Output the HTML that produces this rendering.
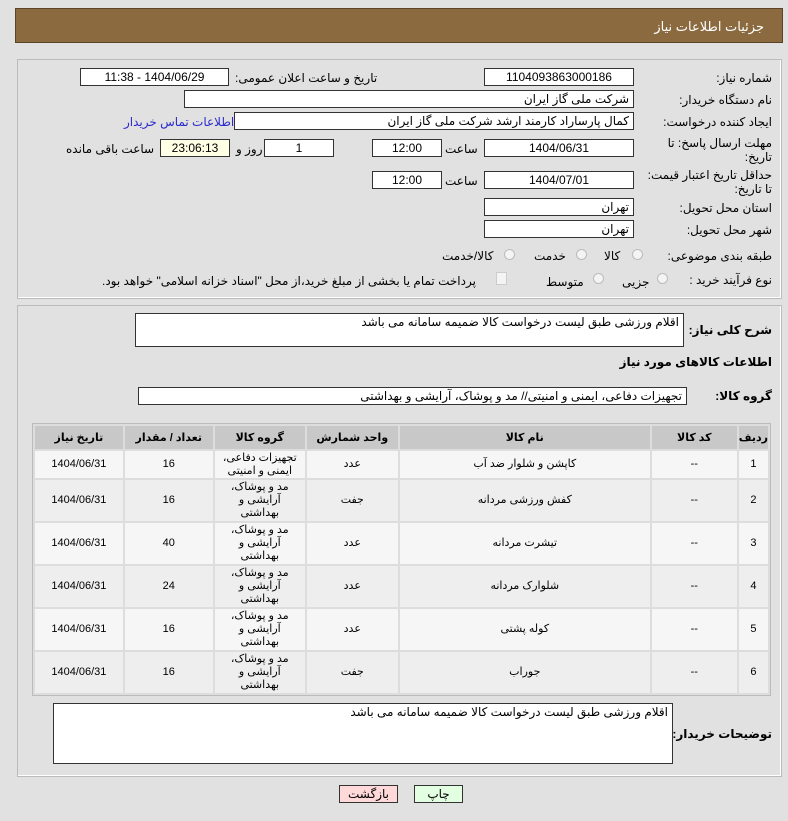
<!DOCTYPE html>
<html><head><meta charset="utf-8"><style>
body{margin:0;width:788px;height:821px;background:#e1e1e1;font-family:"Liberation Sans","DejaVu Sans",sans-serif;font-size:12px;color:#000;position:relative;overflow:hidden}
.a{position:absolute;white-space:nowrap}
.hdr{left:15px;top:8px;width:768px;height:35px;background:#8b6a40;border:1px solid #5a4326;box-sizing:border-box}
.hdr span{position:absolute;right:18px;top:10px;color:#fff;font-size:13px}
.pan{border:1px solid #bbb;box-sizing:border-box;box-shadow:inset -1px -1px 0 #fff}
.in{position:absolute;background:#fff;border:1px solid #333;box-sizing:border-box;height:18px;line-height:16px;font-size:12px;direction:rtl;padding:0 4px;white-space:nowrap;overflow:hidden}
.c{text-align:center}
.lb{position:absolute;right:16px;direction:rtl;font-size:12px;text-align:right;white-space:nowrap}
.b{font-weight:bold;font-size:12px;letter-spacing:-0.3px}
.rad{position:absolute;width:11px;height:11px;border-radius:50%;border:1px solid #bbb;background:#f4f4f4;box-sizing:border-box}
table{position:absolute;left:32px;top:423px;width:739px;border-collapse:separate;border-spacing:2px;background:#ddd;border:1px solid #bbb;direction:rtl;font-size:11px}
td,th{text-align:center;padding:0}
th{background:#c8c8c8;height:23px;font-weight:bold;font-size:11px}
td{height:41px;background:#eeeeee;line-height:13px}
tr.r1 td{height:27px;background:#f6f6f6}
tr.alt td{background:#f6f6f6}
</style></head><body>
<div class="a hdr"><span>جزئیات اطلاعات نیاز</span></div>
<div class="a pan" style="left:17px;top:59px;width:765px;height:240px"></div>
<div class="a pan" style="left:17px;top:305px;width:765px;height:472px"></div>

<div class="lb" style="top:71px">شماره نیاز:</div>
<div class="in c" style="left:484px;top:68px;width:150px">1104093863000186</div>
<div class="a" style="left:235px;top:71px;direction:rtl">تاریخ و ساعت اعلان عمومی:</div>
<div class="in c" style="left:80px;top:68px;width:149px">1404/06/29 - 11:38</div>

<div class="lb" style="top:93px">نام دستگاه خریدار:</div>
<div class="in" style="left:184px;top:90px;width:450px">شرکت ملی گاز ایران</div>

<div class="lb" style="top:115px">ایجاد کننده درخواست:</div>
<div class="in" style="left:234px;top:112px;width:400px">کمال پارساراد کارمند ارشد شرکت ملی گاز ایران</div>
<div class="a" style="left:124px;top:115px;color:#2a2acc;direction:rtl">اطلاعات تماس خریدار</div>

<div class="lb" style="top:136px;line-height:14px">مهلت ارسال پاسخ: تا<br>تاریخ:</div>
<div class="in c" style="left:484px;top:139px;width:150px">1404/06/31</div>
<div class="a" style="left:445px;top:142px">ساعت</div>
<div class="in c" style="left:372px;top:139px;width:70px">12:00</div>
<div class="in c" style="left:264px;top:139px;width:70px">1</div>
<div class="a" style="left:236px;top:142px;direction:rtl">روز و</div>
<div class="in c" style="left:160px;top:139px;width:70px;background:#ffffe6">23:06:13</div>
<div class="a" style="left:66px;top:142px;direction:rtl">ساعت باقی مانده</div>

<div class="lb" style="top:168px;line-height:14px">حداقل تاریخ اعتبار قیمت:<br>تا تاریخ:</div>
<div class="in c" style="left:484px;top:171px;width:150px">1404/07/01</div>
<div class="a" style="left:445px;top:174px">ساعت</div>
<div class="in c" style="left:372px;top:171px;width:70px">12:00</div>

<div class="lb" style="top:201px">استان محل تحویل:</div>
<div class="in" style="left:484px;top:198px;width:150px">تهران</div>
<div class="lb" style="top:223px">شهر محل تحویل:</div>
<div class="in" style="left:484px;top:220px;width:150px">تهران</div>

<div class="lb" style="top:249px">طبقه بندی موضوعی:</div>
<div class="rad" style="left:632px;top:249px"></div><div class="a" style="left:604px;top:249px">کالا</div>
<div class="rad" style="left:576px;top:249px"></div><div class="a" style="left:534px;top:249px">خدمت</div>
<div class="rad" style="left:504px;top:249px"></div><div class="a" style="left:442px;top:249px">کالا/خدمت</div>

<div class="lb" style="top:273px">نوع فرآیند خرید :</div>
<div class="rad" style="left:657px;top:273px"></div><div class="a" style="left:622px;top:275px">جزیی</div>
<div class="rad" style="left:593px;top:273px"></div><div class="a" style="left:546px;top:275px">متوسط</div>
<div class="a" style="left:496px;top:272px;width:9px;height:11px;border:1px solid #ccc;background:#f4f4f4"></div>
<div class="a" style="left:102px;top:274px;direction:rtl">پرداخت تمام یا بخشی از مبلغ خرید،از محل "اسناد خزانه اسلامی" خواهد بود.</div>

<div class="lb b" style="top:323px">شرح کلی نیاز:</div>
<div class="in" style="left:135px;top:313px;width:549px;height:34px">اقلام ورزشی طبق لیست درخواست کالا ضمیمه سامانه می باشد</div>
<div class="lb b" style="top:355px">اطلاعات کالاهای مورد نیاز</div>
<div class="lb b" style="top:389px">گروه کالا:</div>
<div class="in" style="left:138px;top:387px;width:549px">تجهیزات دفاعی، ایمنی و امنیتی// مد و پوشاک، آرایشی و بهداشتی</div>

<table>
<tr><th style="width:25px">ردیف</th><th style="width:85px">کد کالا</th><th style="width:250px">نام کالا</th><th style="width:91px">واحد شمارش</th><th style="width:90px">گروه کالا</th><th style="width:88px">تعداد / مقدار</th><th>تاریخ نیاز</th></tr>
<tr class="r1"><td>1</td><td>--</td><td>کاپشن و شلوار ضد آب</td><td>عدد</td><td>تجهیزات دفاعی،<br>ایمنی و امنیتی</td><td>16</td><td>1404/06/31</td></tr>
<tr><td>2</td><td>--</td><td>کفش ورزشی مردانه</td><td>جفت</td><td>مد و پوشاک،<br>آرایشی و<br>بهداشتی</td><td>16</td><td>1404/06/31</td></tr>
<tr class="alt"><td>3</td><td>--</td><td>تیشرت مردانه</td><td>عدد</td><td>مد و پوشاک،<br>آرایشی و<br>بهداشتی</td><td>40</td><td>1404/06/31</td></tr>
<tr><td>4</td><td>--</td><td>شلوارک مردانه</td><td>عدد</td><td>مد و پوشاک،<br>آرایشی و<br>بهداشتی</td><td>24</td><td>1404/06/31</td></tr>
<tr class="alt"><td>5</td><td>--</td><td>کوله پشتی</td><td>عدد</td><td>مد و پوشاک،<br>آرایشی و<br>بهداشتی</td><td>16</td><td>1404/06/31</td></tr>
<tr><td>6</td><td>--</td><td>جوراب</td><td>جفت</td><td>مد و پوشاک،<br>آرایشی و<br>بهداشتی</td><td>16</td><td>1404/06/31</td></tr>
</table>

<div class="lb b" style="top:727px">توضیحات خریدار:</div>
<div class="in" style="left:53px;top:703px;width:620px;height:61px">اقلام ورزشی طبق لیست درخواست کالا ضمیمه سامانه می باشد</div>

<div class="a c" style="left:339px;top:785px;width:59px;height:18px;line-height:16px;background:#ffd9d9;border:1px solid #333;box-sizing:border-box">بازگشت</div>
<div class="a c" style="left:414px;top:785px;width:49px;height:18px;line-height:16px;background:#e2ffe2;border:1px solid #333;box-sizing:border-box">چاپ</div>
</body></html>
